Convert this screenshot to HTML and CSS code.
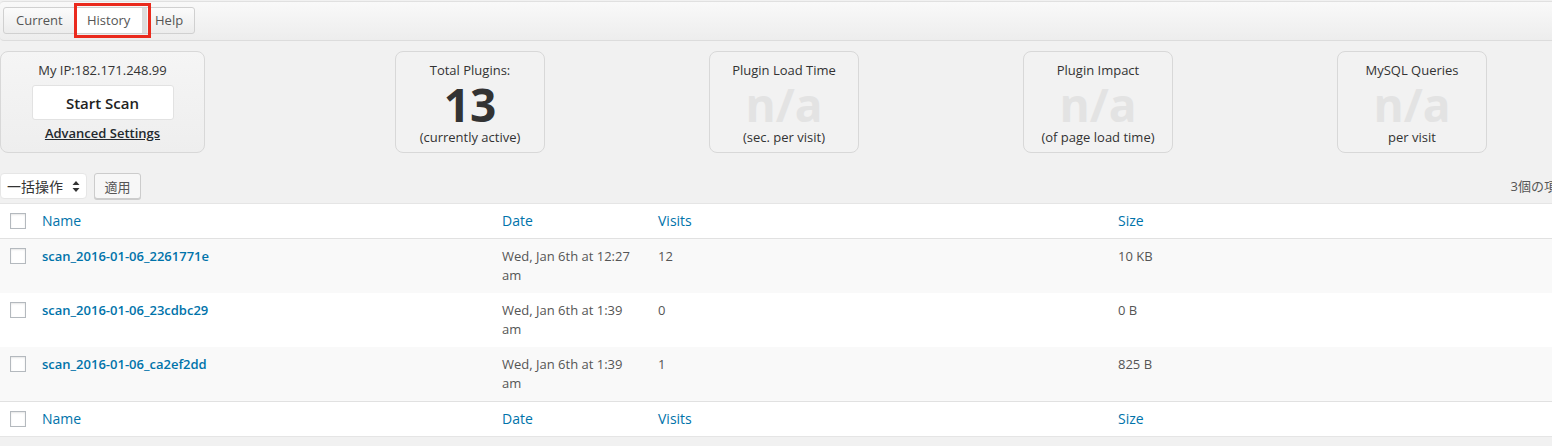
FILE: index.html
```html
<!DOCTYPE html>
<html lang="ja">
<head>
    <meta charset="UTF-8">
    <meta name="viewport" content="width=device-width, initial-scale=1.0">
    <title>P3 Plugin Performance Profiler - History</title>
    <link rel="stylesheet" href="styles.css">
</head>
<body>
    <div class="wrap">
        <div class="tab-bar">
            <div class="tabs">
                <a class="tab tab-current" href="#">Current</a>
                <a class="tab active" href="#">History</a>
                <a class="tab tab-help" href="#">Help</a>
                <span class="highlight"></span>
            </div>
        </div>

        <div class="cards">
            <div class="card ip-card">
                <div class="ip">My IP:182.171.248.99</div>
                <button class="scan-btn" type="button">Start Scan</button>
                <a class="adv-link" href="#">Advanced Settings</a>
            </div>
            <div class="stats">
                <div class="card stat">
                    <div class="stat-title">Total Plugins:</div>
                    <div class="stat-value">13</div>
                    <div class="stat-sub">(currently active)</div>
                </div>
                <div class="card stat">
                    <div class="stat-title">Plugin Load Time</div>
                    <div class="stat-value empty">n/a</div>
                    <div class="stat-sub">(sec. per visit)</div>
                </div>
                <div class="card stat">
                    <div class="stat-title">Plugin Impact</div>
                    <div class="stat-value empty">n/a</div>
                    <div class="stat-sub">(of page load time)</div>
                </div>
                <div class="card stat">
                    <div class="stat-title">MySQL Queries</div>
                    <div class="stat-value empty">n/a</div>
                    <div class="stat-sub">per visit</div>
                </div>
            </div>
        </div>

        <div class="tablenav">
            <div class="bulk">
                <div class="select">
                    <span>一括操作</span>
                    <svg width="8" height="13" viewBox="0 0 8 13">
                        <path d="M4 1 L7.5 5 L0.5 5 Z" fill="#333"/>
                        <path d="M4 12 L7.5 8 L0.5 8 Z" fill="#333"/>
                    </svg>
                </div>
                <button class="apply-btn" type="button">適用</button>
            </div>
            <div class="count">3個の項目</div>
        </div>

        <table class="scans">
            <colgroup>
                <col class="col-cb">
                <col class="col-name">
                <col class="col-date">
                <col class="col-visits">
                <col>
            </colgroup>
            <thead>
                <tr>
                    <th class="cb"><span class="checkbox"></span></th>
                    <th><a href="#">Name</a></th>
                    <th><a href="#">Date</a></th>
                    <th><a href="#">Visits</a></th>
                    <th><a href="#">Size</a></th>
                </tr>
            </thead>
            <tbody>
                <tr class="alt">
                    <td class="cb"><span class="checkbox"></span></td>
                    <td><a class="scan-name" href="#">scan_2016-01-06_2261771e</a></td>
                    <td>Wed, Jan 6th at 12:27 am</td>
                    <td>12</td>
                    <td>10 KB</td>
                </tr>
                <tr>
                    <td class="cb"><span class="checkbox"></span></td>
                    <td><a class="scan-name" href="#">scan_2016-01-06_23cdbc29</a></td>
                    <td>Wed, Jan 6th at 1:39 am</td>
                    <td>0</td>
                    <td>0 B</td>
                </tr>
                <tr class="alt">
                    <td class="cb"><span class="checkbox"></span></td>
                    <td><a class="scan-name" href="#">scan_2016-01-06_ca2ef2dd</a></td>
                    <td>Wed, Jan 6th at 1:39 am</td>
                    <td>1</td>
                    <td>825 B</td>
                </tr>
            </tbody>
            <tfoot>
                <tr>
                    <th class="cb"><span class="checkbox"></span></th>
                    <th><a href="#">Name</a></th>
                    <th><a href="#">Date</a></th>
                    <th><a href="#">Visits</a></th>
                    <th><a href="#">Size</a></th>
                </tr>
            </tfoot>
        </table>
    </div>
</body>
</html>
```

FILE: styles.css
```css
html, body {
    overflow: hidden;
}
body {
    margin: 0;
    padding: 0;
    background: #f1f1f1;
    font-family: "Open Sans", "Noto Sans CJK JP", sans-serif;
    font-size: 13px;
    line-height: 19px;
    color: #444;
}
a {
    color: #0073aa;
    text-decoration: none;
}
.wrap {
    width: 1578px;
}

/* tabs */
.tab-bar {
    margin-top: 1px;
    height: 38px;
    border-top: 1px solid #e0e0e0;
    border-bottom: 1px solid #dcdcdc;
    border-radius: 4px 0 0 4px;
    background: linear-gradient(#f9f9f9, #ededed);
    display: flex;
    align-items: center;
}
.tabs {
    position: relative;
    display: flex;
    margin-left: 3px;
    margin-bottom: 2px;
    height: 27px;
    border: 1px solid #d0d0d0;
    border-radius: 3px;
    box-sizing: border-box;
    background: linear-gradient(#fbfbfb, #ececec);
}
.tab {
    display: flex;
    align-items: center;
    color: #555;
    font-size: 13px;
}
.tab-current {
    padding: 0 12px 0 12px;
    width: 46px;
}
.tab.active {
    background: #fff;
    border-right: 5px solid #ddd;
    padding: 0 12px 0 13px;
    width: 43px;
}
.tab-help {
    padding: 0 11px 0 8px;
}
.highlight {
    position: absolute;
    left: 70px;
    top: -5px;
    width: 71px;
    height: 29px;
    border: 3px solid #ea2a1d;
    pointer-events: none;
}

/* summary cards */
.cards {
    display: flex;
    margin-top: 10px;
}
.card {
    box-sizing: border-box;
    height: 102px;
    border: 1px solid #d8d8d8;
    border-radius: 8px;
    background: #f2f2f2;
    text-align: center;
    color: #333;
}
.ip-card {
    width: 205px;
    padding-top: 9px;
    display: flex;
    flex-direction: column;
    align-items: center;
    background: linear-gradient(#f5f5f5, #eeeeee);
}
.scan-btn {
    margin-top: 5px;
    width: 142px;
    height: 35px;
    background: #fff;
    border: 1px solid #e2e2e2;
    border-radius: 3px;
    font-family: inherit;
    font-size: 15px;
    font-weight: 600;
    color: #222;
}
.adv-link {
    margin-top: 4px;
    color: #23282d;
    font-weight: 600;
    text-decoration: underline;
}
.stats {
    display: flex;
    gap: 164px;
    margin-left: 190px;
}
.stat {
    width: 150px;
    padding-top: 9px;
}
.stat-title,
.stat-sub {
    line-height: 19px;
}
.stat-value {
    font-size: 46px;
    line-height: 48px;
    font-weight: 700;
    color: #333;
}
.stat-value.empty {
    color: #e3e3e3;
}

/* bulk actions */
.tablenav {
    display: flex;
    justify-content: space-between;
    align-items: center;
    margin-top: 20px;
    height: 26px;
}
.bulk {
    display: flex;
    gap: 7px;
}
.select {
    box-sizing: border-box;
    width: 87px;
    height: 26px;
    display: flex;
    align-items: center;
    justify-content: space-between;
    padding: 0 6px 0 6px;
    background: #fff;
    border: 1px solid #e6e6e6;
    border-radius: 4px;
    font-size: 14px;
    color: #333;
}
.apply-btn {
    height: 26px;
    width: 47px;
    padding: 0;
    border: 1px solid #ccc;
    border-radius: 3px;
    background: #f7f7f7;
    box-shadow: 0 1px 0 #ccc;
    font-family: inherit;
    font-size: 13px;
    color: #555;
}
.count {
    margin-right: 8px;
    color: #555;
}

/* list table */
.scans {
    margin-top: 4px;
    width: 100%;
    border-collapse: collapse;
    table-layout: fixed;
    background: #fff;
    border-top: 1px solid #e5e5e5;
    border-bottom: 1px solid #e5e5e5;
    box-shadow: 0 1px 1px rgba(0, 0, 0, 0.04);
}
.col-cb { width: 32px; }
.col-name { width: 460px; }
.col-date { width: 156px; }
.col-visits { width: 460px; }
.scans th,
.scans td {
    padding: 8px 10px;
    text-align: left;
    vertical-align: top;
}
.scans th {
    font-size: 14px;
    font-weight: 400;
    line-height: 18px;
}
.scans td {
    color: #555;
    line-height: 19px;
}
.scans thead tr {
    border-bottom: 1px solid #e1e1e1;
}
.scans tfoot tr {
    border-top: 1px solid #e1e1e1;
}
.scans tr.alt {
    background: #f9f9f9;
}
.scans .cb {
    padding: 9px 0 0 10px;
}
.scans th.cb {
    padding-top: 9px;
}
.checkbox {
    display: block;
    box-sizing: border-box;
    width: 16px;
    height: 16px;
    border: 1px solid #b4b9be;
    background: #fff;
    box-shadow: inset 0 1px 2px rgba(0, 0, 0, 0.1);
}
.scan-name {
    font-weight: 600;
}
```
